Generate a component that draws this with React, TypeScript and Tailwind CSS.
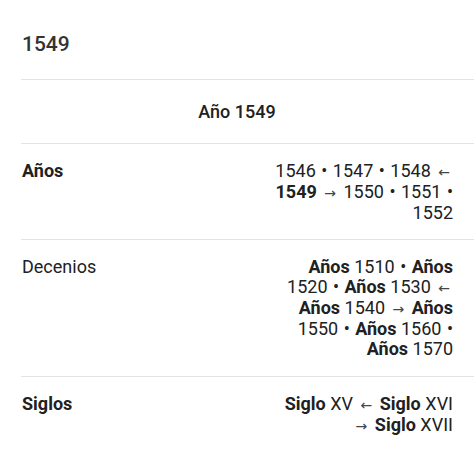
import type { ReactNode } from "react";

// Small arrow glyph used between years / decades / centuries
function Arrow({ dir }: { dir: "left" | "right" }) {
	return (
		<span className="inline-block px-[3px] text-[14px] font-normal text-[#444] font-['DejaVu_Sans',sans-serif]">
			{dir === "left" ? "←" : "→"}
		</span>
	);
}

const Dot = () => <span className="px-px"> • </span>;

type Row = {
	label: string;
	bold: boolean;
	pad: string;
	lines: ReactNode[];
};

const rows: Row[] = [
	{
		label: "Años",
		bold: true,
		pad: "pt-[17px] pb-[16px]",
		lines: [
			<>
				1546<Dot />1547<Dot />1548 <Arrow dir="left" />
			</>,
			<>
				<b className="font-bold">1549</b> <Arrow dir="right" /> 1550<Dot />1551
				<span className="pl-px"> •</span>
			</>,
			<>1552</>,
		],
	},
	{
		label: "Decenios",
		bold: false,
		pad: "pt-[17px] pb-[17px]",
		lines: [
			<>
				<b className="font-bold">Años</b> 1510<Dot />
				<b className="font-bold">Años</b>
			</>,
			<>
				1520<Dot />
				<b className="font-bold">Años</b> 1530 <Arrow dir="left" />
			</>,
			<>
				<b className="font-bold">Años</b> 1540 <Arrow dir="right" />{" "}
				<b className="font-bold">Años</b>
			</>,
			<>
				1550<Dot />
				<b className="font-bold">Años</b> 1560
				<span className="pl-px"> •</span>
			</>,
			<>
				<b className="font-bold">Años</b> 1570
			</>,
		],
	},
	{
		label: "Siglos",
		bold: true,
		pad: "pt-[17px] pb-[17px]",
		lines: [
			<>
				<b className="font-bold">Siglo</b> XV <Arrow dir="left" />{" "}
				<b className="font-bold">Siglo</b> XVI
			</>,
			<>
				<Arrow dir="right" /> <b className="font-bold">Siglo</b> XVII
			</>,
		],
	},
];

export default function App() {
	return (
		<div className="min-h-[449px] w-full bg-white font-['Roboto',sans-serif] text-[#202122]">
			{/* Page title */}
			<div className="h-[79px] pl-[22px] pt-[30px]">
				<h1 className="text-[21px] leading-[28px] font-medium text-[#333]">1549</h1>
			</div>

			{/* Infobox */}
			<div className="ml-[21px]">
				<div className="flex h-[65px] items-center justify-center border-y border-[#e3e3e3] pr-[21px]">
					<span className="text-[18px] font-medium">Año 1549</span>
				</div>

				{rows.map((row) => (
					<div
						key={row.label}
						className={`flex justify-between border-b border-[#e3e3e3] pl-px pr-[21px] text-[18px] leading-[20px] ${row.pad}`}
					>
						<div className={row.bold ? "font-bold" : "font-normal"}>{row.label}</div>
						<div className="flex flex-col items-end text-right">
							{row.lines.map((line, i) => (
								<div key={`${row.label}-${i}`} className="whitespace-nowrap">
									{line}
								</div>
							))}
						</div>
					</div>
				))}
			</div>
		</div>
	);
}
